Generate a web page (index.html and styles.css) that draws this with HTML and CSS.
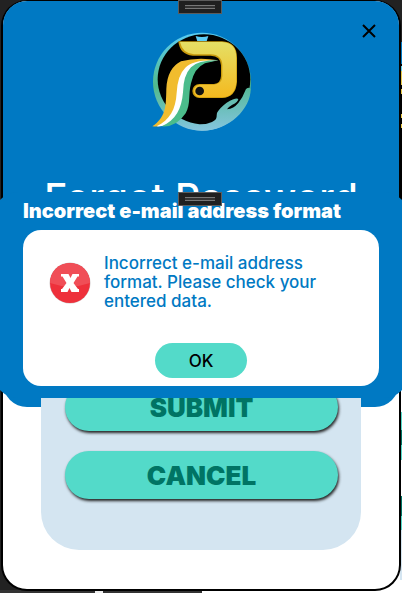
FILE: index.html
```html
<!DOCTYPE html>
<html lang="en">
<head>
<meta charset="utf-8">
<meta name="viewport" content="width=device-width, initial-scale=1">
<title>Forgot Password</title>
<link rel="stylesheet" href="styles.css">
</head>
<body>
<div class="desktop">
  <div class="backdrop"></div>
  <main class="window">
    <header class="header">
      <button class="close" aria-label="Close">
        <svg viewBox="0 0 14 14" width="14" height="14"><path d="M1 1 13 13M13 1 1 13" stroke="#000" stroke-width="2" fill="none"/></svg>
      </button>
      <svg class="logo" viewBox="36 96 300 300" aria-hidden="true">
        <defs>
          <linearGradient id="gold" x1="0" y1="0" x2="0" y2="1"><stop offset="0" stop-color="#e5df65"/><stop offset="1" stop-color="#f4b91f"/></linearGradient>
          <linearGradient id="ring" x1="0" y1="0" x2="0" y2="1"><stop offset="0" stop-color="#5acdf4"/><stop offset=".55" stop-color="#52ba8b"/><stop offset="1" stop-color="#82c6df"/></linearGradient>
          <linearGradient id="hand" x1="0" y1="0" x2="0" y2="1"><stop offset="0" stop-color="#55b99a"/><stop offset="1" stop-color="#85c5de"/></linearGradient>
        </defs>
        <circle cx="186" cy="245" r="147" fill="url(#ring)"/>
        <ellipse cx="192" cy="238" rx="139" ry="135" fill="#000"/>
        <path d="M167 108Q186 114 205 108L200 124H172Z" fill="#5cccf5"/>
        <path d="M115 124H246Q291 126 291 174V245Q288 292 246 294H178A20 20 0 0 1 178 252H222Q242 250 243 228V196Q242 168 212 167H158Q119 164 115 124Z" fill="#c99a0c"/>
        <path d="M120 126H246Q289 128 289 174V245Q286 290 246 292H180A19 19 0 0 1 180 254H222Q246 252 247 228V196Q246 164 212 163H162Q127 160 120 126Z" fill="url(#gold)"/>
        <circle cx="179" cy="273" r="13" fill="#111"/>
        <path d="M235 181Q174 170 123 184Q82 204 79 266C78 322 77 351 37 379Q72 383 98 361C132 332 126 292 134 252Q142 208 178 190Q202 180 235 181Z" fill="#f1bc2e"/>
        <path d="M235 181Q160 177 136 203Q113 225 110 278C107 330 89 358 50 379Q89 381 112 352C138 319 126 288 137 248Q147 204 182 188Z" fill="#fff"/>
        <path d="M235 181Q174 180 153 202Q130 226 129 277C125 327 107 361 65 379Q108 383 137 340C153 311 144 286 153 250Q163 204 195 190Z" fill="#4bbc8b"/>
        <path d="M110 367Q153 388 216 366C236 357 227 348 232 337Q240 323 260 308Q289 291 295 297Q294 307 277 314Q266 320 261 328Q281 326 295 309Q309 291 318 267Q327 260 332 266C333 326 267 392 186 392Q142 391 110 367Z" fill="url(#hand)"/>
      </svg>
      <h1 class="title">Forgot Password</h1>
    </header>
    <div class="panel">
      <button class="action">SUBMIT</button>
      <button class="action">CANCEL</button>
    </div>
  </main>
  <div class="grip"></div>
  <section class="dialog" role="alertdialog" aria-labelledby="dialog-title" aria-describedby="dialog-text">
    <div class="grip"></div>
    <h2 class="dialog-title" id="dialog-title">Incorrect e-mail address format</h2>
    <div class="card">
      <div class="message">
        <svg class="error" viewBox="0 0 42 42" aria-hidden="true">
          <circle cx="21" cy="21" r="20.5" fill="#cfc5c6"/>
          <circle cx="21" cy="21" r="20" fill="#ee303b"/>
          <path d="M1 21A20 20 0 0 1 41 21Q21 28 1 21Z" fill="#f04e57"/>
          <path d="M12 12H19.500L21.500 16 23.500 12H30V14.500H28.500L24.500 21 29 27H30V30H22.500L20.500 26 18.500 30H12V27H13L17.500 21 13.500 14.500H12Z" fill="#fff"/>
        </svg>
        <p class="text" id="dialog-text">Incorrect e-mail address format. Please check your entered data.</p>
      </div>
      <button class="ok">OK</button>
    </div>
  </section>
</div>
</body>
</html>
```
FILE: styles.css
```css
* { box-sizing: border-box; }

body {
  margin: 0;
  background: #222;
  font-family: Inter, "Liberation Sans", sans-serif;
}

h1, h2, p { margin: 0; }

button {
  border: 0;
  padding: 0;
  font-family: inherit;
}

.desktop {
  position: relative;
  min-height: 100vh;
  padding: 0 1px 2px;
  overflow: hidden;
}

/* Slivers of the windows that lie behind this one */
.backdrop {
  position: absolute;
  inset: 0;
  background:
    linear-gradient(#eee, #eee) 95px 100% / 8px 2px no-repeat,
    linear-gradient(90deg, #333 202px, #fff 202px) 0 100% / 100% 3px no-repeat,
    linear-gradient(#222 42px, #0079c3 42px 64px, #000 64px 66px, #5ecfe8 66px 71px, #e9c94a 71px 85px, #000 85px 89px, #e9c94a 89px 94px, #000 94px 114px, #e9c94a 114px 118px, #000 118px 124px, #e9c94a 124px 128px, #000 128px 200px, #fff 200px 412px, #53dac9 412px 430px, #007464 430px 445px, #53dac9 445px 460px, #fff 460px 496px, #007464 496px 516px, #53dac9 516px 530px, #d4e5f1 530px 580px, #fff 580px) 100% 0 / 2px 100% no-repeat,
    linear-gradient(#fff, #fff) 100% 100% / 24px 24px no-repeat;
}

.window {
  position: relative;
  background: #fff;
  border: 2px solid #000;
  border-top-width: 1px;
  border-radius: 26px;
  padding-bottom: 39px;
}

.header {
  display: flex;
  flex-direction: column;
  align-items: center;
  min-height: 406px;
  padding-top: 22px;
  background: #0079c3;
  border-radius: 24px;
  color: #fff;
}

.close {
  align-self: flex-end;
  display: grid;
  place-items: center;
  width: 16px;
  height: 16px;
  margin-right: 22px;
  background: none;
}

.logo {
  width: 100px;
  height: 100px;
  margin-top: -7px;
  margin-left: 2px;
}

.title {
  margin-top: 42px;
  font-size: 39px;
  line-height: 48px;
  font-weight: 500;
  white-space: nowrap;
}

.panel {
  display: flex;
  flex-direction: column;
  gap: 20px;
  margin: -60px 38px 0;
  padding: 36px 23px 51px 24px;
  background: #d4e5f1;
  border-radius: 38px;
  position: relative;
}

.action {
  height: 48px;
  border-radius: 24px;
  background: #53dac9;
  color: #007464;
  font-size: 26px;
  font-weight: 900;
  box-shadow: 1px 2px 3px #222;
}

.grip {
  position: absolute;
  top: 0;
  left: 50%;
  width: 44px;
  height: 14px;
  margin-left: -23px;
  border: 1px solid #5c5c5c;
  background:
    linear-gradient(#777 1px, #333 1px 3px, #777 3px) 50% 50% / 30px 4px no-repeat,
    #202020;
}

.dialog {
  position: absolute;
  top: 192px;
  left: -6px;
  right: -6px;
  padding: 7px 29px 12px;
  background: #0079c3;
  border-radius: 24px;
}

.dialog-title {
  color: #fff;
  font-size: 20px;
  line-height: 24px;
  font-weight: 900;
  white-space: nowrap;
}

.card {
  display: flex;
  flex-direction: column;
  align-items: center;
  margin-top: 7px;
  padding: 24px 26px 8px;
  background: #fff;
  border-radius: 18px;
}

.message {
  display: flex;
  align-items: center;
  align-self: stretch;
  gap: 13px;
}

.error {
  flex: none;
  width: 42px;
  height: 42px;
}

.text {
  max-width: 226px;
  color: #0079c3;
  font-size: 17px;
  line-height: 19px;
  font-weight: 500;
}

.ok {
  width: 92px;
  height: 35px;
  margin-top: 32px;
  border-radius: 24px;
  background: #53dac9;
  color: #000;
  font-size: 17px;
  font-weight: 500;
}
```
